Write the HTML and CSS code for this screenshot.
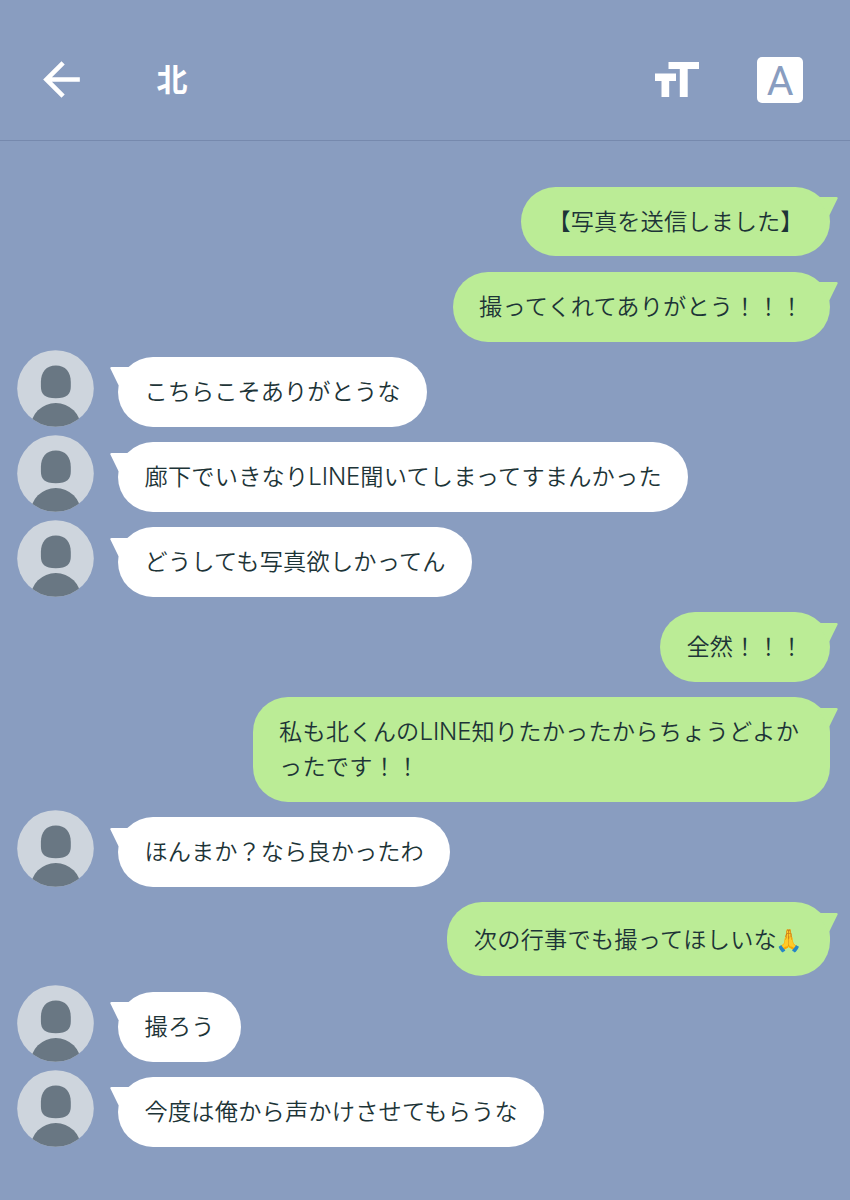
FILE: index.html
```html
<!DOCTYPE html>
<html lang="ja">
<head>
    <meta charset="UTF-8">
    <meta name="viewport" content="width=device-width, initial-scale=1.0">
    <title>北</title>
    <link rel="stylesheet" href="styles.css">
</head>
<body>

    <!-- Shared shapes -->
    <svg class="defs" width="0" height="0">
        <symbol id="avatar" viewBox="0 0 77 77">
            <clipPath id="round"><circle cx="38.5" cy="38.5" r="38.3"/></clipPath>
            <circle cx="38.5" cy="38.5" r="38.3" fill="#ced5dd"/>
            <path d="M38.8 15.5C48.5 15.5 53.8 22 53.8 32V36C53.8 44.5 50 48.2 38.8 48.2S23.9 44.5 23.9 36V32C23.9 22 29.2 15.5 38.8 15.5Z" fill="#697783"/>
            <ellipse cx="38.8" cy="78" rx="25.2" ry="25" fill="#697783" clip-path="url(#round)"/>
        </symbol>
        <symbol id="tail" viewBox="0 0 22 20">
            <path d="M22 0H1.6Q-.2 0 .5 1.7L8.2 17.5L10 19.5Q14 9 22 0Z" fill="currentColor"/>
        </symbol>
    </svg>

    <header class="header">
        <svg class="back" viewBox="0 0 24 24"><path d="M20 11H7.83l5.59-5.59L12 4l-8 8 8 8 1.41-1.41L7.83 13H20v-2z" fill="#fff"/></svg>
        <h1>北</h1>
        <svg class="size" viewBox="0 0 44 35"><path d="M13.5 0H44V7H32.7V35H24.8V7H13.5ZM0 11.6H21V19H14.2V35H6.5V19H0Z" fill="#fff"/></svg>
        <div class="lang">A</div>
    </header>

    <main class="chat">
        <div class="row me"><p class="bubble snug"><svg class="tail"><use href="#tail"/></svg>【写真を送信しました】</p></div>
        <div class="row me"><p class="bubble"><svg class="tail"><use href="#tail"/></svg>撮ってくれてありがとう！！！</p></div>
        <div class="row">
            <svg class="avatar"><use href="#avatar"/></svg>
            <p class="bubble snug"><svg class="tail"><use href="#tail"/></svg>こちらこそありがとうな</p>
        </div>
        <div class="row">
            <svg class="avatar"><use href="#avatar"/></svg>
            <p class="bubble"><svg class="tail"><use href="#tail"/></svg>廊下でいきなり<span class="latin">LINE</span>聞いてしまってすまんかった</p>
        </div>
        <div class="row">
            <svg class="avatar"><use href="#avatar"/></svg>
            <p class="bubble"><svg class="tail"><use href="#tail"/></svg>どうしても写真欲しかってん</p>
        </div>
        <div class="row me"><p class="bubble"><svg class="tail"><use href="#tail"/></svg>全然！！！</p></div>
        <div class="row me"><p class="bubble wide"><svg class="tail"><use href="#tail"/></svg>私も北くんの<span class="latin">LINE</span>知りたかったからちょうどよか<br>ったです！！</p></div>
        <div class="row">
            <svg class="avatar"><use href="#avatar"/></svg>
            <p class="bubble snug"><svg class="tail"><use href="#tail"/></svg>ほんまか？なら良かったわ</p>
        </div>
        <div class="row me"><p class="bubble tall"><svg class="tail"><use href="#tail"/></svg>次の行事でも撮ってほしいな<span class="emoji">🙏</span></p></div>
        <div class="row">
            <svg class="avatar"><use href="#avatar"/></svg>
            <p class="bubble"><svg class="tail"><use href="#tail"/></svg>撮ろう</p>
        </div>
        <div class="row">
            <svg class="avatar"><use href="#avatar"/></svg>
            <p class="bubble"><svg class="tail"><use href="#tail"/></svg>今度は俺から声かけさせてもらうな</p>
        </div>
    </main>

</body>
</html>
```
FILE: styles.css
```css
* {
    box-sizing: border-box;
}

body {
    margin: 0;
    min-height: 1200px;
    background-color: #899dc0;
    font-family: "Noto Sans CJK JP", sans-serif;
    color: #1d3437;
}

.defs {
    position: absolute;
}

/* Top bar */
.header {
    display: flex;
    align-items: center;
    height: 141px;
    padding: 18px 47px 0 33.5px;
    border-bottom: 1px solid #7689ad;
}

.header h1 {
    margin: 0 auto 2px 68px;
    font-size: 31px;
    line-height: 40px;
    font-weight: bold;
    color: #fff;
}

.back {
    width: 55px;
    height: 55px;
}

.size {
    width: 44px;
    height: 35px;
    margin-right: 58px;
}

.lang {
    width: 46px;
    height: 46px;
    margin-top: 1px;
    border-radius: 5px;
    background-color: #fff;
    color: #899dc0;
    font-family: Roboto, sans-serif;
    font-size: 41px;
    line-height: 48px;
    text-align: center;
}

/* Messages */
.chat {
    display: flex;
    flex-direction: column;
    gap: 15.4px;
    padding: 45.8px 20px 0 17px;
}

.row {
    display: flex;
    align-items: flex-start;
    gap: 24px;
}

.me {
    justify-content: flex-end;
}

.avatar {
    width: 77px;
    height: 77px;
    margin: -7px 0 -1px;
}

.bubble {
    position: relative;
    margin: 0;
    padding: 16.2px 26.5px 18.6px;
    border-radius: 35px;
    background-color: #fff;
    font-size: 23.2px;
    font-weight: 350;
    line-height: 34.9px;
    letter-spacing: 0.22px;
    white-space: nowrap;
}

.me .bubble {
    background-color: #bbec96;
}

.snug {
    letter-spacing: 0.08px;
}

.wide {
    min-width: 577.5px;
}

.tall {
    padding: 18.4px 26.5px 20.8px;
}

.latin {
    font-family: Inter, sans-serif;
    font-size: 24px;
    font-weight: 300;
    line-height: 1;
    letter-spacing: -0.1px;
}

/* Little pointer on the bubble corner */
.tail {
    position: absolute;
    top: 10.5px;
    left: -8px;
    width: 22px;
    height: 20px;
    color: #fff;
}

.me .tail {
    left: auto;
    right: -8px;
    color: #bbec96;
    transform: scaleX(-1);
}

.emoji {
    display: inline-block;
    width: 26.5px;
    margin-left: -2px;
    margin-right: 2px;
    font-family: "Noto Color Emoji", sans-serif;
    font-size: 22px;
    line-height: 24px;
}
```
